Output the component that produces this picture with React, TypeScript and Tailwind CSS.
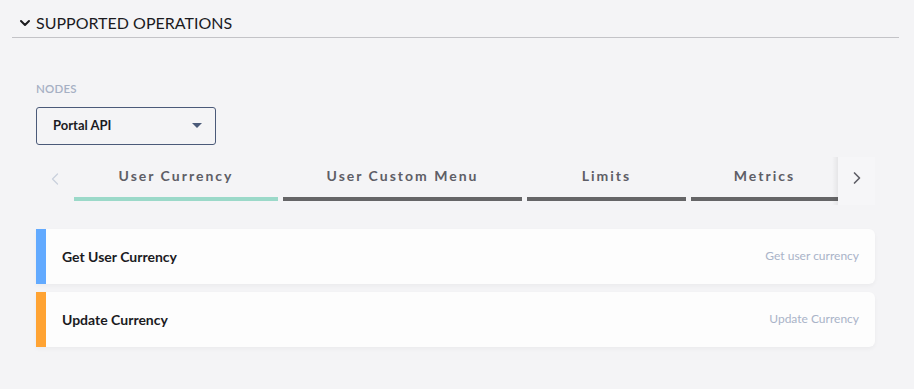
import { ChevronDown, ChevronLeft, ChevronRight } from "lucide-react";

const tabs = [
  { label: "User Currency", width: "w-[204px]", active: true },
  { label: "User Custom Menu", width: "w-[239px]", active: false },
  { label: "Limits", width: "w-[159px]", active: false },
  { label: "Metrics", width: "w-[147px]", active: false },
];

const operations = [
  { title: "Get User Currency", summary: "Get user currency", color: "bg-[#62aaff]" },
  { title: "Update Currency", summary: "Update Currency", color: "bg-[#ffa333]" },
];

export default function App() {
  return (
    <div
      className="w-[914px] h-[389px] overflow-hidden bg-[#f4f4f6] px-[12px] pt-[12px]"
      style={{ fontFamily: "Lato, 'Open Sans', sans-serif" }}
    >
      <div className="flex items-center gap-[3px] w-[887px] h-[26px] border-b border-[#c3c3c7] pl-[5px] pb-[3px]">
        <ChevronDown size={16} strokeWidth={3} className="text-[#1b1b1f]" />
        <span className="text-[16px] text-[#1b1b1f] leading-none">SUPPORTED OPERATIONS</span>
      </div>

      <div className="w-[839px] ml-[24px] mt-[45px]">
        <div className="text-[11.5px] font-semibold text-[#a6b0c4] tracking-[0.2px] leading-none">NODES</div>
        <div className="mt-[12px] w-[180px] h-[38px] border border-[#4b5a79] rounded-[3px] flex items-center justify-between pl-[16px] pr-[13px]">
          <span className="text-[13px] font-bold text-[#1b1b1f]">Portal API</span>
          <span className="w-0 h-0 border-l-[5px] border-r-[5px] border-t-[5px] border-l-transparent border-r-transparent border-t-[#4b5a79]" />
        </div>

        <div className="mt-[12px] flex h-[48px]">
          <div className="w-[38px] flex items-center justify-center pb-[4px]">
            <ChevronLeft size={20} strokeWidth={1.5} className="text-[#c9d0dd]" />
          </div>
          <div className="flex gap-[5px] flex-1 overflow-hidden">
            {tabs.map((t) => (
              <div key={t.label} className={`${t.width} shrink-0 flex flex-col`}>
                <div className="flex-1 flex items-center justify-center text-[14px] font-bold tracking-[2px] text-[#5e5e66] pb-[2px]">
                  {t.label}
                </div>
                <div className={`h-[4px] mb-[4px] ${t.active ? "bg-[#9bd9c9]" : "bg-[#656567]"}`} />
              </div>
            ))}
          </div>
          <div className="relative w-[37px] flex items-center justify-center bg-[#f6f6f8] pb-[6px] pl-[1px]">
            <div className="absolute left-[-6px] top-0 bottom-0 w-[6px] bg-gradient-to-l from-[rgba(0,0,0,0.06)] to-transparent" />
            <ChevronRight size={20} strokeWidth={2} className="text-[#5e5e66]" />
          </div>
        </div>

        <div className="mt-[24px] flex flex-col gap-[8px]">
          {operations.map((op) => (
            <div
              key={op.title}
              className="flex h-[55px] bg-[#fdfdfd] rounded-r-[6px] shadow-[0_2px_4px_rgba(0,0,0,0.04)]"
            >
              <div className={`w-[10px] ${op.color}`} />
              <div className="flex-1 flex items-center justify-between pl-[16px] pr-[16px]">
                <span className="text-[14px] font-bold text-[#1b1b1f]">{op.title}</span>
                <span className="text-[12px] text-[#a9b3c8]">{op.summary}</span>
              </div>
            </div>
          ))}
        </div>
      </div>
    </div>
  );
}
